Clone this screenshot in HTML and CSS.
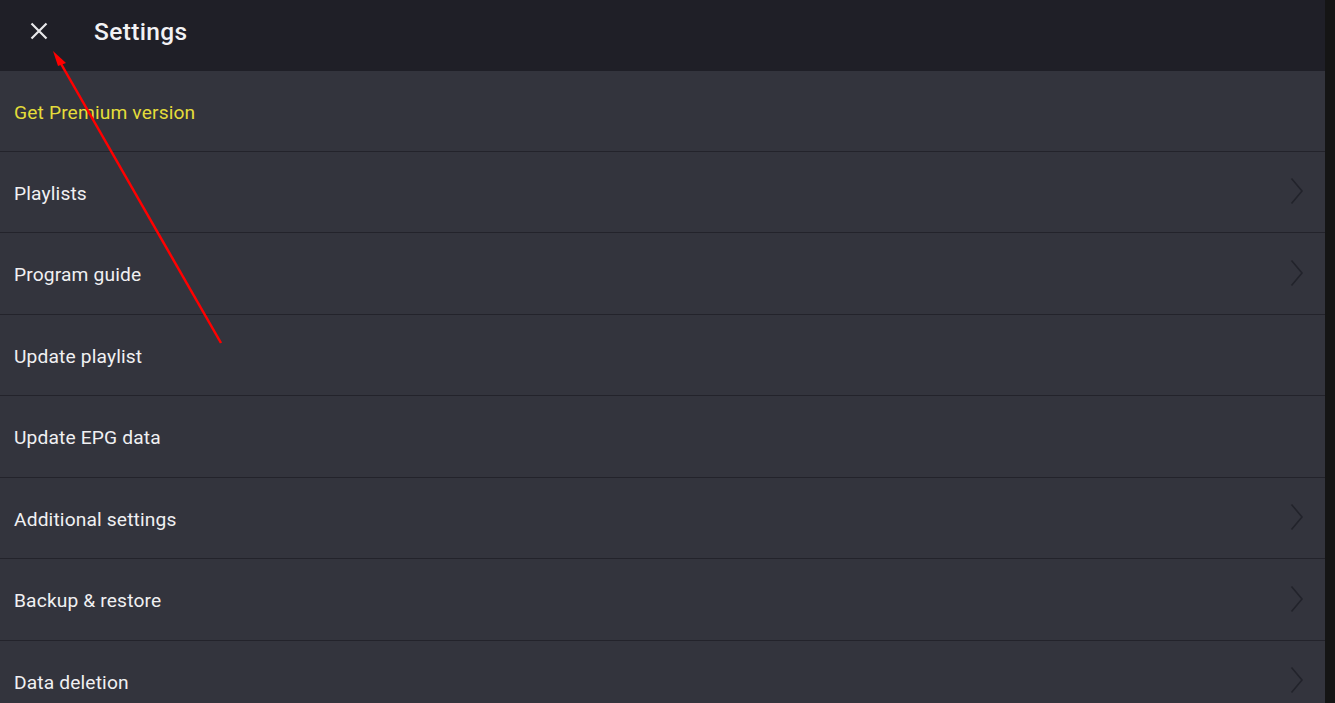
FILE: index.html
```html
<!DOCTYPE html>
<html>
<head>
<meta charset="utf-8">
<link rel="stylesheet" href="styles.css">
</head>
<body>
<div class="app">
  <header class="topbar">
    <button class="close" aria-label="Close">
      <svg width="20" height="20" viewBox="0 0 20 20"><path d="M2.5 2.5 L17.5 17.5 M17.5 2.5 L2.5 17.5" stroke="#e8e8ea" stroke-width="2.2" stroke-linecap="butt"/></svg>
    </button>
    <h1 class="title">Settings</h1>
  </header>
  <ul class="list">
    <li class="row premium"><span>Get Premium version</span></li>
    <li class="row"><span>Playlists</span><svg class="chev" width="14" height="28" viewBox="0 0 14 28"><path d="M1.5 1.5 L12 14 L1.5 26.5" fill="none" stroke="#22232b" stroke-width="1.6"/></svg></li>
    <li class="row"><span>Program guide</span><svg class="chev" width="14" height="28" viewBox="0 0 14 28"><path d="M1.5 1.5 L12 14 L1.5 26.5" fill="none" stroke="#22232b" stroke-width="1.6"/></svg></li>
    <li class="row"><span>Update playlist</span></li>
    <li class="row"><span>Update EPG data</span></li>
    <li class="row"><span>Additional settings</span><svg class="chev" width="14" height="28" viewBox="0 0 14 28"><path d="M1.5 1.5 L12 14 L1.5 26.5" fill="none" stroke="#22232b" stroke-width="1.6"/></svg></li>
    <li class="row"><span>Backup &amp; restore</span><svg class="chev" width="14" height="28" viewBox="0 0 14 28"><path d="M1.5 1.5 L12 14 L1.5 26.5" fill="none" stroke="#22232b" stroke-width="1.6"/></svg></li>
    <li class="row"><span>Data deletion</span><svg class="chev" width="14" height="28" viewBox="0 0 14 28"><path d="M1.5 1.5 L12 14 L1.5 26.5" fill="none" stroke="#22232b" stroke-width="1.6"/></svg></li>
  </ul>
  <svg class="annot" width="1335" height="703" viewBox="0 0 1335 703">
    <line x1="221" y1="343" x2="60" y2="62" stroke="#ff0000" stroke-width="2.5"/>
    <polygon points="53,51 66,63 58,66" fill="#ff0000"/>
  </svg>
</div>
</body>
</html>
```
FILE: styles.css
```css
* { box-sizing: border-box; }
html, body { margin: 0; padding: 0; }
body {
  background: #151515;
  font-family: Roboto, "Noto Sans", sans-serif;
  overflow: hidden;
  width: 1335px;
  height: 703px;
}
.app {
  position: relative;
  width: 1325px;
  height: 703px;
  overflow: hidden;
  background: #33343d;
}
.topbar {
  height: 71px;
  background: #1f1f27;
  display: flex;
  align-items: center;
  padding-left: 29px;
  padding-bottom: 9px;
}
.close {
  background: none;
  border: 0;
  padding: 0;
  width: 20px;
  height: 20px;
  display: flex;
}
.title {
  margin: 0 0 0 45px;
  font-size: 24.5px;
  font-weight: 500;
  color: #f2f2f4;
  letter-spacing: 0.35px;
}
.list {
  list-style: none;
  margin: 0;
  padding: 0;
}
.row {
  height: 81.5px;
  border-bottom: 1.5px solid #23232b;
  background: #33343d;
  display: flex;
  align-items: center;
  justify-content: space-between;
  padding: 3px 21px 0 14px;
  font-size: 19.2px;
  color: #f0f0f2;
  letter-spacing: 0.15px;
}
.row.premium { color: #e4dc3a; height: 80.5px; }
.chev { display: block; margin-top: -4px; }
.annot {
  position: absolute;
  left: 0;
  top: 0;
  pointer-events: none;
}
```
